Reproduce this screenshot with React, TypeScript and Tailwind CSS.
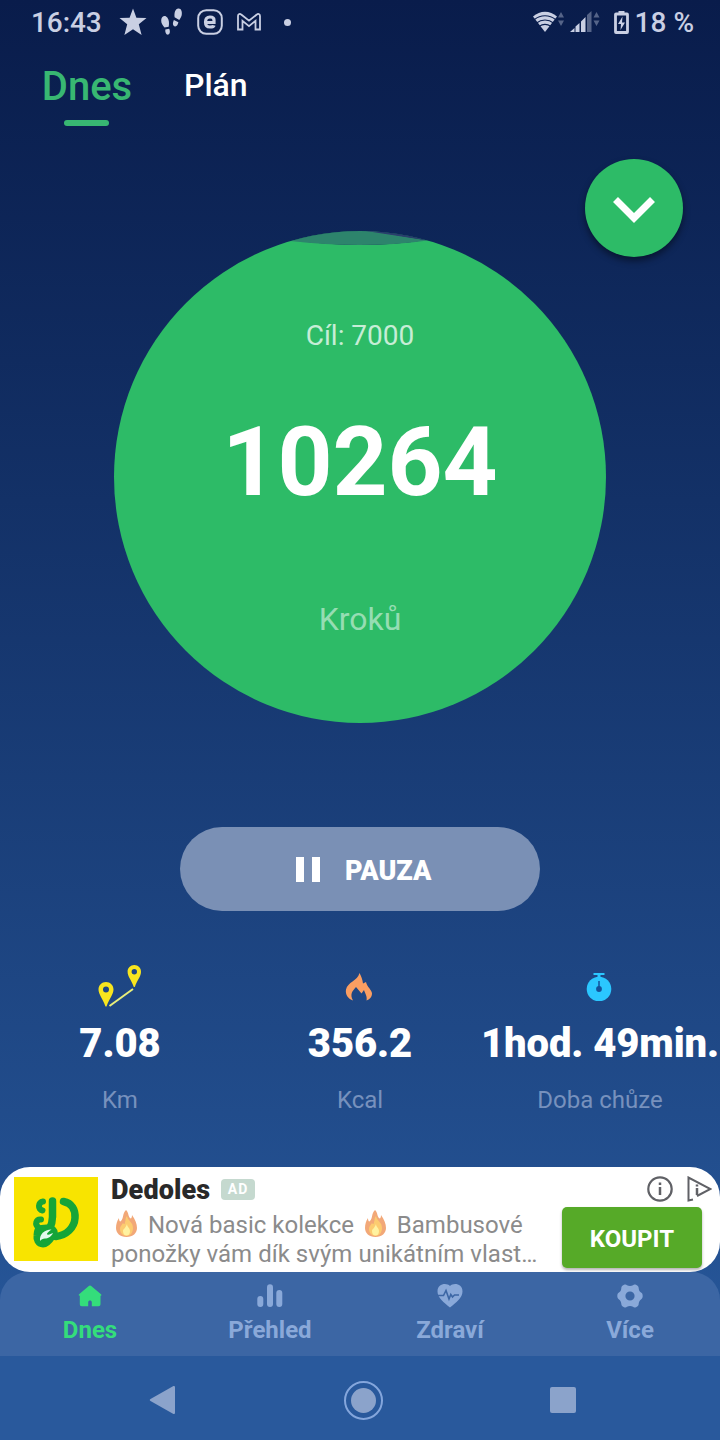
import type { ReactNode } from "react";

function StatusBar() {
    return (
        <header className="flex h-11 items-center justify-between pl-[31px] pr-[26px] text-[#c9cfe3]">
            <div className="flex items-center">
                <span className="w-[88px] pt-[2px] text-[28px] font-medium leading-none tracking-[-0.1px]">16:43</span>
                <svg className="h-[28px] w-[28px]" viewBox="0 0 28 28" fill="currentColor">
                    <path d="M14 0.500l3.400 9.200 10.100.4-7.700 6.200 2.800 10.700-8.600-5.800-8.600 5.800 2.800-10.700-7.700-6.200 10.100-.4z" />
                </svg>
                <svg className="ml-[13px] h-[28px] w-[24px]" viewBox="0 0 24 28" fill="currentColor">
                    <path d="M1.200 12c.3-4 4-5.500 6.100-2.500 1.900 2.700 2 5.500 1.400 9.200l-4.200.9C2.500 17.300 1 15 1.200 12zM5.300 21.600l3.800-.8c1.300 2.200 1 5.200-.8 5.800-2.100.6-3.300-2-3-5zM14.600 9.200c-.5-4.500.6-8.400 3.800-8.700 3-.2 4 3.400 3.300 6.800-.6 2.400-1.700 3.300-2.400 4.600zM13.900 11.900l4.500 2.400c-.5 2.700-2 4.700-4 3.900-2-.9-1.700-3.800-.5-6.300z" />
                </svg>
                <svg className="ml-[13px] h-[26px] w-[26px]" viewBox="0 0 26 26" fill="none" stroke="currentColor">
                    <rect x="1.200" y="1.200" width="23.600" height="23.600" rx="8" strokeWidth="2" />
                    <path d="M9 13.500h8v-2.500c0-2-1-3-4-3s-4.500 1.300-4.500 5 1.200 5 4.500 5c2.200 0 3.700-.5 4-1.700" strokeWidth="3.200" />
                </svg>
                <svg className="ml-[14px] h-[18px] w-[24px]" viewBox="0 0 24 18" fill="none" stroke="currentColor" strokeWidth="1.800">
                    <path d="M1 16.500V3C1 .8 3 .5 4.200 1.500l7.800 6.200 7.800-6.200C21 .5 23 .8 23 3v13.500h-4.500V7.800L12 13.200 5.500 7.800v8.700z" />
                </svg>
                <span className="ml-[23px] h-[7px] w-[7px] rounded-full bg-current" />
            </div>
            <div className="flex items-center">
                <svg className="h-[22px] w-[67px]" viewBox="0 0 67 22" fill="currentColor">
                    <path d="M0 5.500C7-.8 17-.8 24 5.500L12 21z" />
                    <path d="M1.500 8.500C7.500 3.500 16.500 3.500 22.500 8.500M3.500 12c5-4 12-4 17 0M6.500 15.200c3-2.500 8-2.500 11 0" fill="none" stroke="#0a1e4e" strokeWidth="1.100" />
                    <path d="M25 6.500l3-5.500 3 5.500zM25 9.500l3 5.500 3-5.500zM60.500 6.500l3-5.500 3 5.500zM60.500 9.500l3 5.500 3-5.500zM54 4l4.500-4v21H54z" opacity=".4" />
                    <path d="M37 21l4.500-4v4zM42.500 15.500l4-3.500v9h-4zM48 10.500l4.500-4.500v15H48z" />
                </svg>
                <svg className="ml-[14px] mr-[6px] h-[23px] w-[15px]" viewBox="0 0 15 23" fill="none" stroke="currentColor">
                    <path d="M4.500 0h6v3h-6z" fill="currentColor" stroke="none" />
                    <rect x="1.500" y="3" width="12" height="18.500" rx=".5" strokeWidth="2.800" />
                    <path d="M8.500 5.500L4 13h3l-.5 6L11 11.500H8z" fill="currentColor" stroke="none" />
                </svg>
                <span className="pt-[2px] text-[28px] font-medium leading-none">18 %</span>
            </div>
        </header>
    );
}

function Tabs() {
    return (
        <nav className="flex h-[82px] items-start pl-[42px] pt-[18px]">
            <div className="flex w-[90px] flex-col items-center">
                <span className="pt-px text-[40px] font-medium leading-[48px] text-[#38b772]">Dnes</span>
                <span className="mr-px mt-[9px] h-[6px] w-[45px] rounded-full bg-[#38b772]" />
            </div>
            <span className="ml-[52px] text-[32px] font-medium leading-[46px] text-white">Plán</span>
        </nav>
    );
}

function StepsCircle() {
    return (
        <section className="relative mx-auto -mt-[26px] flex h-[492px] w-[492px] flex-col items-center overflow-hidden rounded-full bg-[#2dbb67]">
            {/* wave surface at the top of the filled circle */}
            <svg className="absolute left-0 top-0 h-5 w-full" viewBox="0 0 492 20">
                <path d="M170 0H322V9H312C270 15.500 225 15.500 182 9.500H170z" fill="#102758" />
                <path d="M176 10C215 -3 245 0 258 0L314 9.500C270 15.500 225 15.500 176 10z" fill="#2d846c" />
                <path d="M252 0C282 0 300 5 314 9.500z" fill="#2a3d6d" />
            </svg>
            <span className="mt-[85px] text-[28px] leading-10 text-[#c6edd6]">Cíl: 7000</span>
            <span className="mt-[56px] text-[96px] font-bold leading-[100px] text-white">10264</span>
            <span className="mt-[87px] text-[32px] leading-10 text-[#96ddb3]">Kroků</span>
        </section>
    );
}

function RouteIcon() {
    return (
        <svg className="h-[44px] w-[44px]" viewBox="0 0 44 44">
            <path d="M11.500 41L35 24" stroke="#e9ef7a" strokeWidth="2" />
            <path fillRule="evenodd" fill="#f7e51f" d="M8 17C3.700 17 .5 20.200.5 24.500c0 5 4 8.500 7 17h1c3-8.500 7-12 7-17 0-4.300-3.200-7.500-7.500-7.500zm0 4.500a3 3 0 110 6 3 3 0 010-6zM36.300 0c-4 0-6.700 3-6.700 6.700 0 4.800 3.400 7.500 6.200 15.300h1c2.800-7.800 6.200-10.500 6.200-15.300C43 3 40.300 0 36.300 0zm0 4a2.700 2.700 0 110 5.400 2.700 2.700 0 010-5.400z" />
        </svg>
    );
}

function FlameIcon() {
    return (
        <svg className="mr-[2px] h-[28px] w-[28px]" viewBox="0 0 28 28" fill="#fa9e62">
            <path d="M14.500 0c1.500 3 3 6 3.500 10.500l3-1.500c1 5 6 8 6 11.500 0 3.500-2.500 6-5.500 7 1-4-1.500-7-2.500-10.500l-2.500 3.500-5.500-6.500C7.500 18 4.500 21 8 27.500c-4.500-1.500-8-5.500-7-11C2.500 9 12.500 8 14.500 0z" />
        </svg>
    );
}

function StopwatchIcon() {
    return (
        <svg className="mr-[2px] h-[28px] w-[26px]" viewBox="0 0 26 28">
            <path d="M7.500 0h11v2h-4v3h-3V2h-4z" fill="#2bc7ff" />
            <circle cx="13" cy="16" r="12.300" fill="#2bc7ff" />
            <path d="M13 8v8" stroke="#15529a" strokeWidth="1.500" />
            <circle cx="13" cy="16" r="2.900" fill="#15529a" />
        </svg>
    );
}

function Stat({ icon, value, label }: { icon: ReactNode; value: string; label: string }) {
    return (
        <div className="flex w-[240px] flex-col items-center">
            <div className="flex h-[46px] items-center justify-center">{icon}</div>
            <span className="mt-[9px] whitespace-nowrap text-[40px] font-black leading-[50px] tracking-[-0.1px] text-white">{value}</span>
            <span className="mt-[15px] text-[24px] leading-8 text-[#7791bd]">{label}</span>
        </div>
    );
}

function Fire() {
    return (
        <svg className="mx-[5px] inline-block h-[27px] w-[21px] align-[-4px]" viewBox="0 0 21 27">
            <path d="M10 0c3 3 2 6 4 8 1 1 2 0 2-3 3 4 5 9 5 13 0 5-4 9-10.500 9S0 23 0 18c0-4 1-7 3-10 0 3 1 4 2 3C8 8 6 4 10 0z" fill="#f2a878" />
            <path d="M11 6c1 5 6 6 6 12 0 5-3 8-6.500 8S4 23 4 19c0-3 2-4 3-6 1 2 2 1 2-1 1-2 0-4 2-6z" fill="#fccb70" />
            <path d="M11 14c0 3 3 4 3 7s-1.500 4.500-3.500 4.500S7 24 7 21c0-2 2-2 4-7z" fill="#fff2a0" />
        </svg>
    );
}

function AdBanner() {
    return (
        <section className="flex h-[105px] overflow-hidden rounded-[30px] bg-white">
            <svg className="ml-[14px] mt-[10px] h-[84px] w-[84px]" viewBox="0 0 84 84" fill="none" strokeLinecap="round" strokeLinejoin="round">
                <path d="M0 0h84v84H0z" fill="#f8e400" />
                <g stroke="#15a538" strokeWidth="7.500">
                    <path d="M38.500 24v16c0 5-1 8-3 12" />
                    <path d="M49.500 24.500C58 26 61.500 33 61 41c-.6 10-9 17.500-19 18.500" />
                    <path d="M29 24.500c-5 .5-5.500 8-.5 9M27 42.500c-5-.5-6.500 5-2.500 8" strokeWidth="6" />
                    <path d="M24 53c2-2 6-1.500 9-2 5-.5 9 3 6 7-2 3-5 9-10 9s-6.500-5-6-8c.2-2 0-4 1-6z" fill="#15a538" strokeWidth="7" />
                </g>
                <path d="M26 64c-.5-7 4-11 11.500-11.500-3 2-5 4-4.500 5 2 .5 4-.5 6-1.500-2 4-5 5.500-8 5.500-2 0-4 1-5 2.500z" fill="#e3f9ef" />
            </svg>
            <div className="ml-[13px] w-[437px] pt-[7px]">
                <div className="flex h-[32px] items-center">
                    <span className="w-[102px] text-[27px] font-black tracking-[0.1px] text-[#292929]">Dedoles</span>
                    <span className="-mt-[2px] ml-[8px] flex h-[21px] w-[34px] items-center justify-center rounded-[4px] bg-[#c5d9cf] pt-px text-[14px] font-bold tracking-[1px] text-white">AD</span>
                </div>
                <p className="mt-[4px] whitespace-nowrap text-[24px] leading-[29px] text-[#8b8b8b]">
                    <Fire /> Nová basic kolekce <Fire /> Bambusové
                    <br />
                    <span className="tracking-[0.03px]">ponožky vám dík svým unikátním vlast…</span>
                </p>
            </div>
            <div className="flex flex-1 flex-col">
                <div className="flex h-[40px] items-center justify-end gap-[14px] pr-[8px] pt-[4px]">
                    <svg className="h-[26px] w-[26px]" viewBox="0 0 26 26" fill="none" stroke="#606166" strokeWidth="2.200">
                        <circle cx="13" cy="13" r="11.700" />
                        <path d="M13 11v8M13 6.500V9" strokeWidth="2.500" />
                    </svg>
                    <svg className="h-[26px] w-[25px]" viewBox="0 0 25 26" fill="none" stroke="#606166" strokeWidth="2">
                        <path d="M6 23.500l-4.500 1V1.500L23.500 13 10 20" />
                        <path d="M10 12v7M10 8.500v2" strokeWidth="2.500" />
                    </svg>
                </div>
                <div className="mr-[18px] flex h-[61px] w-[140px] items-center justify-center self-end rounded-[5px] bg-[#56aa28] pt-[2px] text-[24px] font-bold text-white shadow-[0_2px_3px_rgba(0,0,0,0.3)]">
                    KOUPIT
                </div>
            </div>
        </section>
    );
}

function NavItem({ icon, label, active }: { icon: ReactNode; label: string; active?: boolean }) {
    return (
        <div className={`flex w-[180px] flex-col items-center pt-[11px] ${active ? "text-[#34dd7b]" : "text-[#8aa9d9]"}`}>
            <svg className="h-[26px] w-[26px]" viewBox="0 0 26 26" fill="currentColor">{icon}</svg>
            <span className="mt-[6px] text-[24px] font-bold leading-[30px]">{label}</span>
        </div>
    );
}

function BottomNav() {
    return (
        <nav className="flex h-[84px] rounded-t-[28px] bg-[#3c66a4]">
            <NavItem
                active
                label="Dnes"
                icon={<path d="M13 2.500c.7 0 1 .3 1.500.7l9.500 8c.8.8.4 1.500-.5 1.500V21c0 1.500-.8 2.200-2 2.200h-6.700v-4c0-2.200-3.600-2.200-3.600 0v4H4.800c-1.300 0-2-.7-2-2.200v-8.300c-1 0-1.500-.8-.7-1.500l9.400-8c.5-.4.800-.7 1.500-.7z" />}
            />
            <NavItem
                label="Přehled"
                icon={
                    <>
                        <rect x="0.300" y="13" width="6" height="11" rx="3" />
                        <rect x="10" y="1.300" width="6" height="22.700" rx="3" />
                        <rect x="19.300" y="7" width="6" height="17" rx="3" />
                    </>
                }
            />
            <NavItem
                label="Zdraví"
                icon={
                    <>
                        <path d="M13 24.500C7 19.500.5 15 .5 8.500c0-8 9-9 12.500-5.500C16.500-.5 25.500.5 25.500 8.500c0 6.500-6.500 11-12.500 16z" />
                        <path d="M0 12.500h6.500l2.500-5 3 8.500 1.800-4.500 1.700 2.500 2-2H22" fill="none" stroke="#3c66a4" strokeWidth="1.600" />
                    </>
                }
            />
            <NavItem
                label="Více"
                icon={<path fillRule="evenodd" d="M7 1.800c1.300-.6 2.300-.4 3 .4 1.500 1 4.500 1 6 0 .7-.8 1.700-1 3-.4 2 1 2.700 2 2.700 3.500.2 2 1 3.600 2.300 4.300 1.200.6 1.700 1.900 1.700 3.400s-.5 2.800-1.700 3.400c-1.300.7-2.100 2.300-2.300 4.300 0 1.500-.7 2.500-2.700 3.500-1.300.6-2.300.4-3-.4-1.500-1-4.500-1-6 0-.7.8-1.700 1-3 .4-2-1-2.700-2-2.700-3.500-.2-2-1-3.600-2.300-4.300C.8 15.800.3 14.500.3 13S.8 10.200 2 9.600c1.300-.7 2.100-2.300 2.300-4.300C4.300 3.800 5 2.800 7 1.800zm6 6.600a4.600 4.600 0 100 9.200 4.600 4.600 0 000-9.200z" />}
            />
        </nav>
    );
}

function SystemNav() {
    return (
        <footer className="flex h-[84px] items-center bg-[#29599c] pl-[149px] pt-[4px] text-[#8ba3cb]">
            <svg className="h-[30px] w-[26px]" viewBox="0 0 26 30" fill="currentColor">
                <path d="M1.500 14L24 1.200c1-.6 2 0 2 1v25.600c0 1-1 1.600-2 1L1.500 16c-1-.6-1-1.400 0-2z" />
            </svg>
            <div className="ml-[169px] flex h-[39px] w-[39px] items-center justify-center rounded-full border-2 border-[#84a6dc]">
                <span className="h-[25px] w-[25px] rounded-full bg-current" />
            </div>
            <span className="ml-[167px] h-[26px] w-[26px] rounded-[2px] bg-current" />
        </footer>
    );
}

export default function App() {
    return (
        <main className="flex h-[1440px] w-[720px] flex-col overflow-hidden bg-linear-to-b from-[#091c4b] to-[#295b9f] font-[Roboto,sans-serif]">
            <StatusBar />
            <Tabs />
            <div className="mr-[37px] mt-[33px] flex h-[98px] w-[98px] items-center justify-center self-end rounded-full bg-[#2dbb67] shadow-[0_4px_7px_rgba(0,0,0,0.45)]">
                <svg className="mt-1 h-[26px] w-[42px]" viewBox="0 0 42 26" fill="none" stroke="#fff" strokeWidth="7">
                    <path d="M2.500 2.500L21 21 39.500 2.500" />
                </svg>
            </div>
            <StepsCircle />
            <button className="mx-auto mt-[104px] flex h-[84px] w-[360px] items-center rounded-full bg-[#7a90b5] pl-[116px] text-white">
                <span className="h-[25px] w-[8px] bg-white" />
                <span className="ml-[8px] h-[25px] w-[8px] bg-white" />
                <span className="ml-[25px] pt-[4px] text-[27px] font-black leading-none">PAUZA</span>
            </button>
            <section className="mt-[53px] flex h-[203px]">
                <Stat icon={<RouteIcon />} value="7.08" label="Km" />
                <Stat icon={<FlameIcon />} value="356.2" label="Kcal" />
                <Stat icon={<StopwatchIcon />} value="1hod. 49min." label="Doba chůze" />
            </section>
            <AdBanner />
            <BottomNav />
            <SystemNav />
        </main>
    );
}
